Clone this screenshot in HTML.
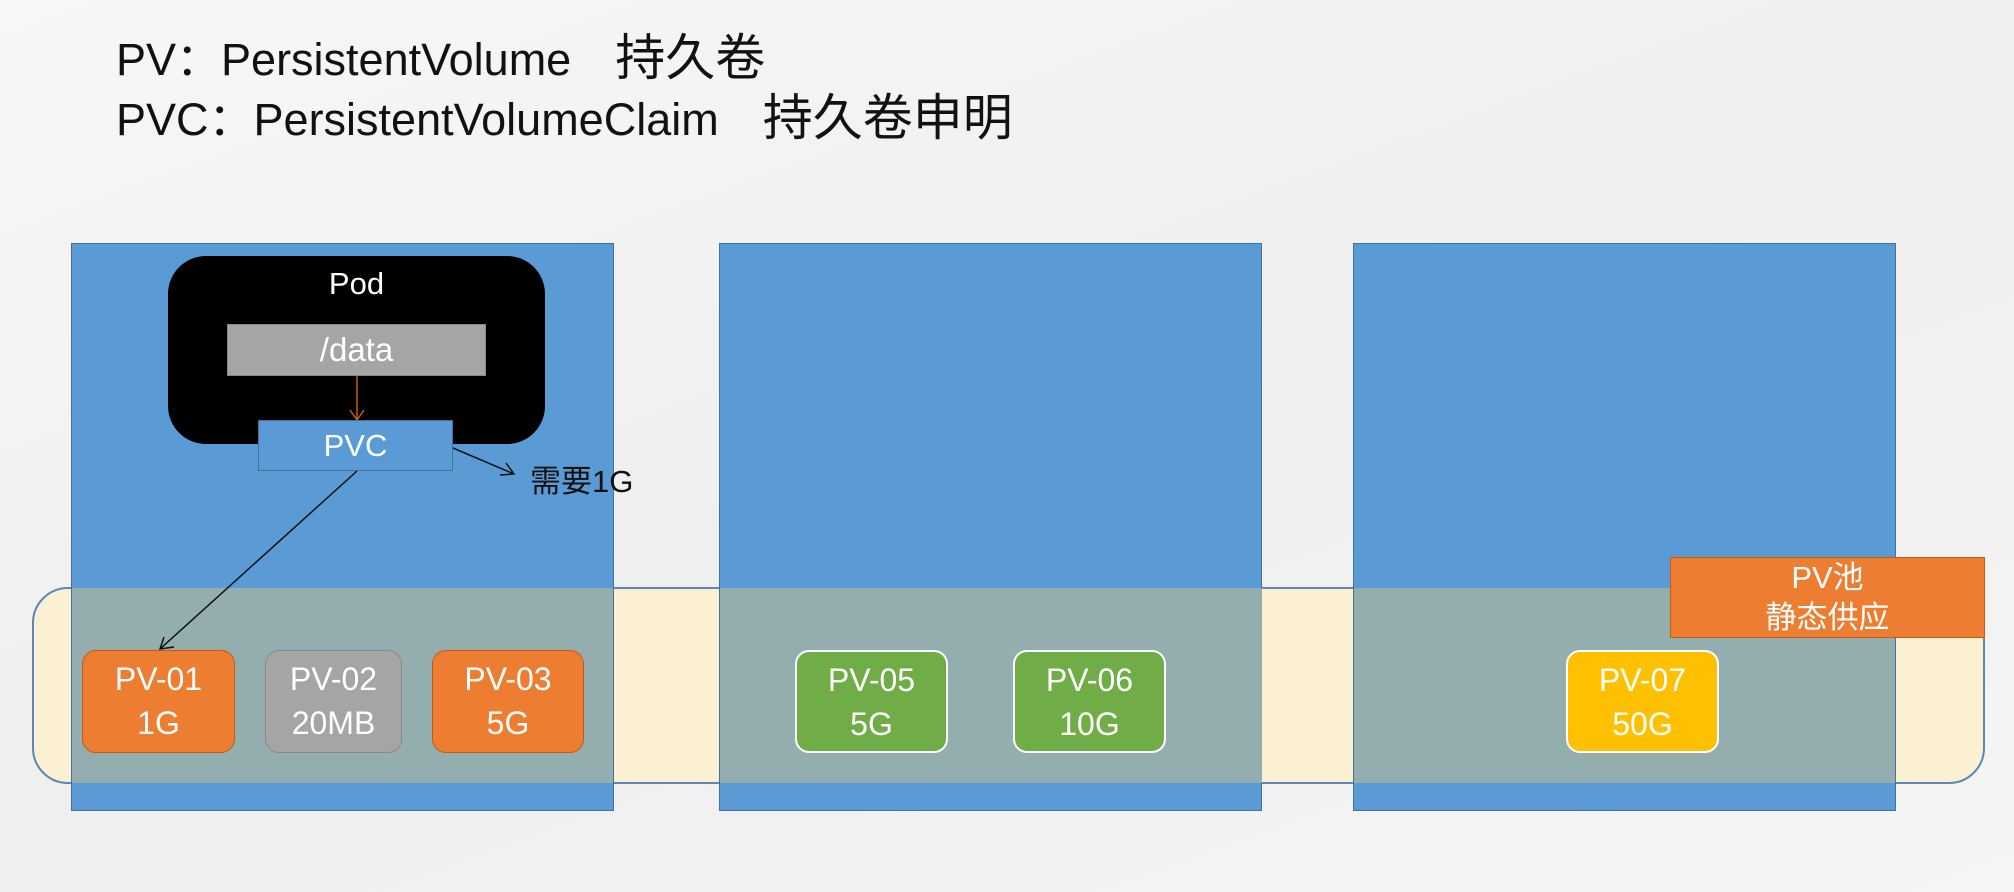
<!DOCTYPE html>
<html><head><meta charset="utf-8"><style>
body{margin:0;width:2014px;height:892px;overflow:hidden;background:linear-gradient(160deg,#f7f7f7,#efefef 50%,#f5f5f5);font-family:"Liberation Sans","Noto Sans CJK SC",sans-serif;position:relative}
.a{position:absolute;box-sizing:border-box}
.blue{background:#5b9bd5;border:1px solid #41719c;top:243px;height:568px;width:543px}
.ov{background:#94aeb0;top:588px;height:195px}
.pv{top:650px;height:103px;border-radius:14px;color:#fff;font-size:32px;text-align:center;line-height:44px;padding-top:6px;border:2px solid #fff}
.t{color:#111;font-size:45px;left:116px;white-space:nowrap}
.t span{font-size:50px;margin-left:44px}
</style></head><body>
<div class="a t" style="top:18px">PV：PersistentVolume<span>持久卷</span></div>
<div class="a t" style="top:78px">PVC：PersistentVolumeClaim<span>持久卷申明</span></div>
<div class="a" style="left:32px;top:587px;width:1953px;height:197px;background:#fcf0d3;border:2px solid #5a86b8;border-radius:36px"></div>
<div class="a blue" style="left:71px"></div>
<div class="a blue" style="left:719px"></div>
<div class="a blue" style="left:1353px"></div>
<div class="a ov" style="left:72px;width:541px"></div>
<div class="a ov" style="left:720px;width:542px"></div>
<div class="a ov" style="left:1354px;width:541px"></div>
<div class="a" style="left:168px;top:256px;width:377px;height:188px;background:#000;border-radius:38px;color:#fff;font-size:31px;text-align:center;padding-top:10px">Pod</div>
<div class="a" style="left:227px;top:324px;width:259px;height:52px;background:#a5a5a5;border:1px solid #888;color:#fff;font-size:33px;text-align:center;line-height:50px">/data</div>
<div class="a" style="left:258px;top:420px;width:195px;height:51px;background:#5b9bd5;border:1px solid #41719c;color:#fff;font-size:31px;text-align:center;line-height:49px">PVC</div>
<div class="a" style="left:530px;top:456px;font-size:31px;color:#111">需要1G</div>
<svg class="a" style="left:0;top:0" width="2014" height="892">
<g fill="none" stroke-width="1.5">
<path d="M357 376V420M350 410l7 10 7-10" stroke="#c55a11"/>
<path d="M453 448L514 474M506 463l8 11-14 1" stroke="#111"/>
<path d="M357 471L160 649M164 637l-4 12 14-2" stroke="#111"/>
</g></svg>
<div class="a pv" style="left:82px;width:153px;background:#ed7d31;border-color:#c55a11;border-width:1px">PV-01<br>1G</div>
<div class="a pv" style="left:265px;width:137px;background:#a5a5a5;border-color:#888;border-width:1px">PV-02<br>20MB</div>
<div class="a pv" style="left:432px;width:152px;background:#ed7d31;border-color:#c55a11;border-width:1px">PV-03<br>5G</div>
<div class="a pv" style="left:795px;width:153px;background:#70ad47">PV-05<br>5G</div>
<div class="a pv" style="left:1013px;width:153px;background:#70ad47">PV-06<br>10G</div>
<div class="a pv" style="left:1566px;width:153px;background:#ffc000">PV-07<br>50G</div>
<div class="a" style="left:1670px;top:557px;width:315px;height:81px;background:#ed7d31;border:1px solid #c55a11;color:#fff;font-size:31px;text-align:center;line-height:40px">PV池<br>静态供应</div>
</body></html>
